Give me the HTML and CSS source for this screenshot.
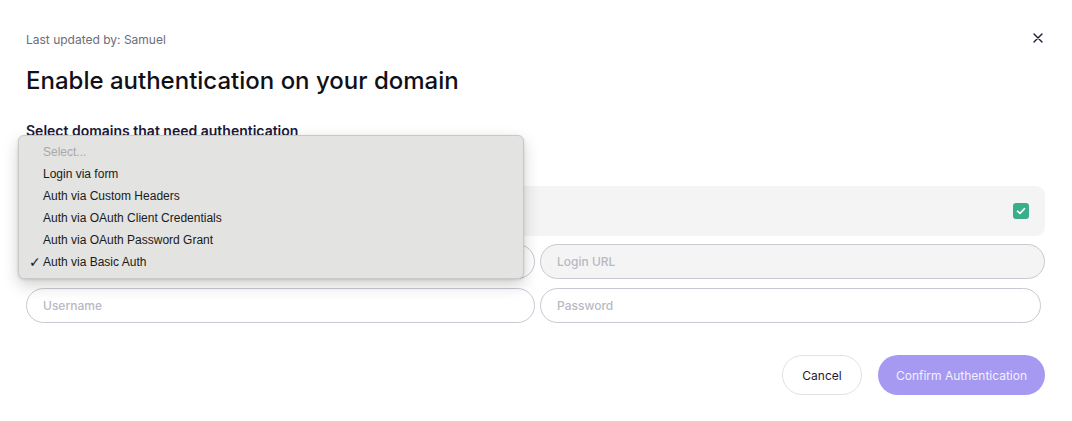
FILE: index.html
```html
<!DOCTYPE html>
<html>
<head>
  <meta charset="utf-8">
  <title>Enable authentication</title>
  <link rel="stylesheet" href="styles.css">
</head>
<body>
<div class="modal">
  <div class="modal__head">
    <span class="modal__meta">Last updated by: Samuel</span>
    <button class="modal__close" type="button" aria-label="Close">
      <svg width="10" height="10" viewBox="0 0 10 10"><path d="M1 1L9 9M9 1L1 9" stroke="#1c1a33" stroke-width="1.4" stroke-linecap="round"/></svg>
    </button>
  </div>
  <h1 class="modal__title">Enable authentication on your domain</h1>

  <div class="field">
    <div class="field__label">Select domains that need authentication</div>
    <div class="picker">
      <div class="picker__trigger"></div>
      <ul class="picker__menu">
        <li class="picker__item picker__item_muted">Select...</li>
        <li class="picker__item">Login via form</li>
        <li class="picker__item">Auth via Custom Headers</li>
        <li class="picker__item">Auth via OAuth Client Credentials</li>
        <li class="picker__item">Auth via OAuth Password Grant</li>
        <li class="picker__item picker__item_checked">Auth via Basic Auth</li>
      </ul>
    </div>
  </div>

  <div class="domain">
    <span class="check">
      <svg width="10" height="8" viewBox="0 0 10 8"><path d="M1.5 4.2L4 6.4L8.5 1.6" fill="none" stroke="#fff" stroke-width="1.6" stroke-linecap="round" stroke-linejoin="round"/></svg>
    </span>
  </div>

  <div class="grid">
    <input class="input">
    <input class="input input_filled" placeholder="Login URL">
    <input class="input" placeholder="Username">
    <input class="input input_short" placeholder="Password">
  </div>

  <div class="actions">
    <button class="btn btn_ghost" type="button">Cancel</button>
    <button class="btn btn_primary" type="button">Confirm Authentication</button>
  </div>
</div>
</body>
</html>
```

FILE: styles.css
```css
* {
    box-sizing: border-box;
  }
body {
    margin: 0;
    background: #ffffff;
    font-family: Inter, "Noto Sans", sans-serif;
    color: #1c1a33;
  }
.modal {
    padding: 29px 27px 24px 26px;
  }
.modal__head {
    display: flex;
    justify-content: space-between;
    align-items: center;
    height: 20px;
  }
.modal__meta {
    font-size: 12px;
    color: #6d6c7c;
  }
.modal__close {
    border: 0;
    background: none;
    padding: 0;
    margin-right: 2px;
    margin-top: -2px;
    display: flex;
    cursor: pointer;
  }
.modal__title {
    margin: 16px 0 0;
    font-size: 24px;
    font-weight: 500;
    line-height: 32px;
    color: #111016;
  }
.field {
    margin-top: 24px;
  }
.field__label {
    font-size: 14px;
    font-weight: 600;
    line-height: 20px;
    color: #1b1838;
  }
.picker {
    position: relative;
    margin-top: 8px;
  }
.picker__trigger {
    width: 494px;
    height: 28px;
    border: 1px solid #c9c8d2;
    border-radius: 18px;
  }
/* native-looking popup list, opened over the form */
.picker__menu {
    position: absolute;
    left: -8px;
    top: -14px;
    width: 506px;
    margin: 0;
    padding: 5px 0 5px;
    list-style: none;
    background: #e3e3e1;
    border: 1px solid #c8c8c6;
    border-radius: 6px;
    box-shadow: 0 6px 16px rgba(0, 0, 0, 0.18), 0 1px 3px rgba(0, 0, 0, 0.12);
    z-index: 2;
  }
.picker__item {
    position: relative;
    height: 22px;
    line-height: 22px;
    padding-left: 24px;
    font-family: "Liberation Sans", Arial, sans-serif;
    font-size: 12px;
    color: #1a1a1a;
  }
.picker__item_muted {
    color: #a8a8a8;
  }
.picker__item_checked::before {
    content: "\2713";
    position: absolute;
    left: 10px;
    top: 0;
    font-family: "DejaVu Sans", sans-serif;
    font-size: 14px;
  }
.domain {
    display: flex;
    justify-content: flex-end;
    align-items: center;
    height: 50px;
    margin-top: 9px;
    padding: 0 16px;
    background: #f4f4f4;
    border-radius: 9px;
  }
.check {
    display: flex;
    align-items: center;
    justify-content: center;
    width: 16px;
    height: 16px;
    border-radius: 3px;
    background: #3aae8a;
  }
.grid {
    display: grid;
    grid-template-columns: 509px 1fr;
    column-gap: 5px;
    row-gap: 9px;
    margin-top: 8px;
  }
.input {
    height: 35px;
    border: 1px solid #c9c8d2;
    border-radius: 18px;
    padding: 0 16px;
    background: #ffffff;
    font-family: Inter, "Noto Sans", sans-serif;
    font-size: 12px;
    font-weight: 500;
    color: #1c1a33;
    outline: none;
  }
.input::placeholder {
    color: #b9b8c4;
  }
.input_filled {
    background: #f4f4f4;
  }
.input_short {
    margin-right: 4px;
  }
.actions {
    display: flex;
    justify-content: flex-end;
    gap: 16px;
    margin-top: 32px;
  }
.btn {
    height: 40px;
    border-radius: 20px;
    font-family: Inter, "Noto Sans", sans-serif;
    font-size: 12px;
    cursor: pointer;
  }
.btn_ghost {
    width: 80px;
    background: #ffffff;
    border: 1px solid #e2e2e6;
    color: #1c1a33;
  }
.btn_primary {
    width: 167px;
    border: 0;
    background: #a599f2;
    color: #f3f1fe;
  }
```
